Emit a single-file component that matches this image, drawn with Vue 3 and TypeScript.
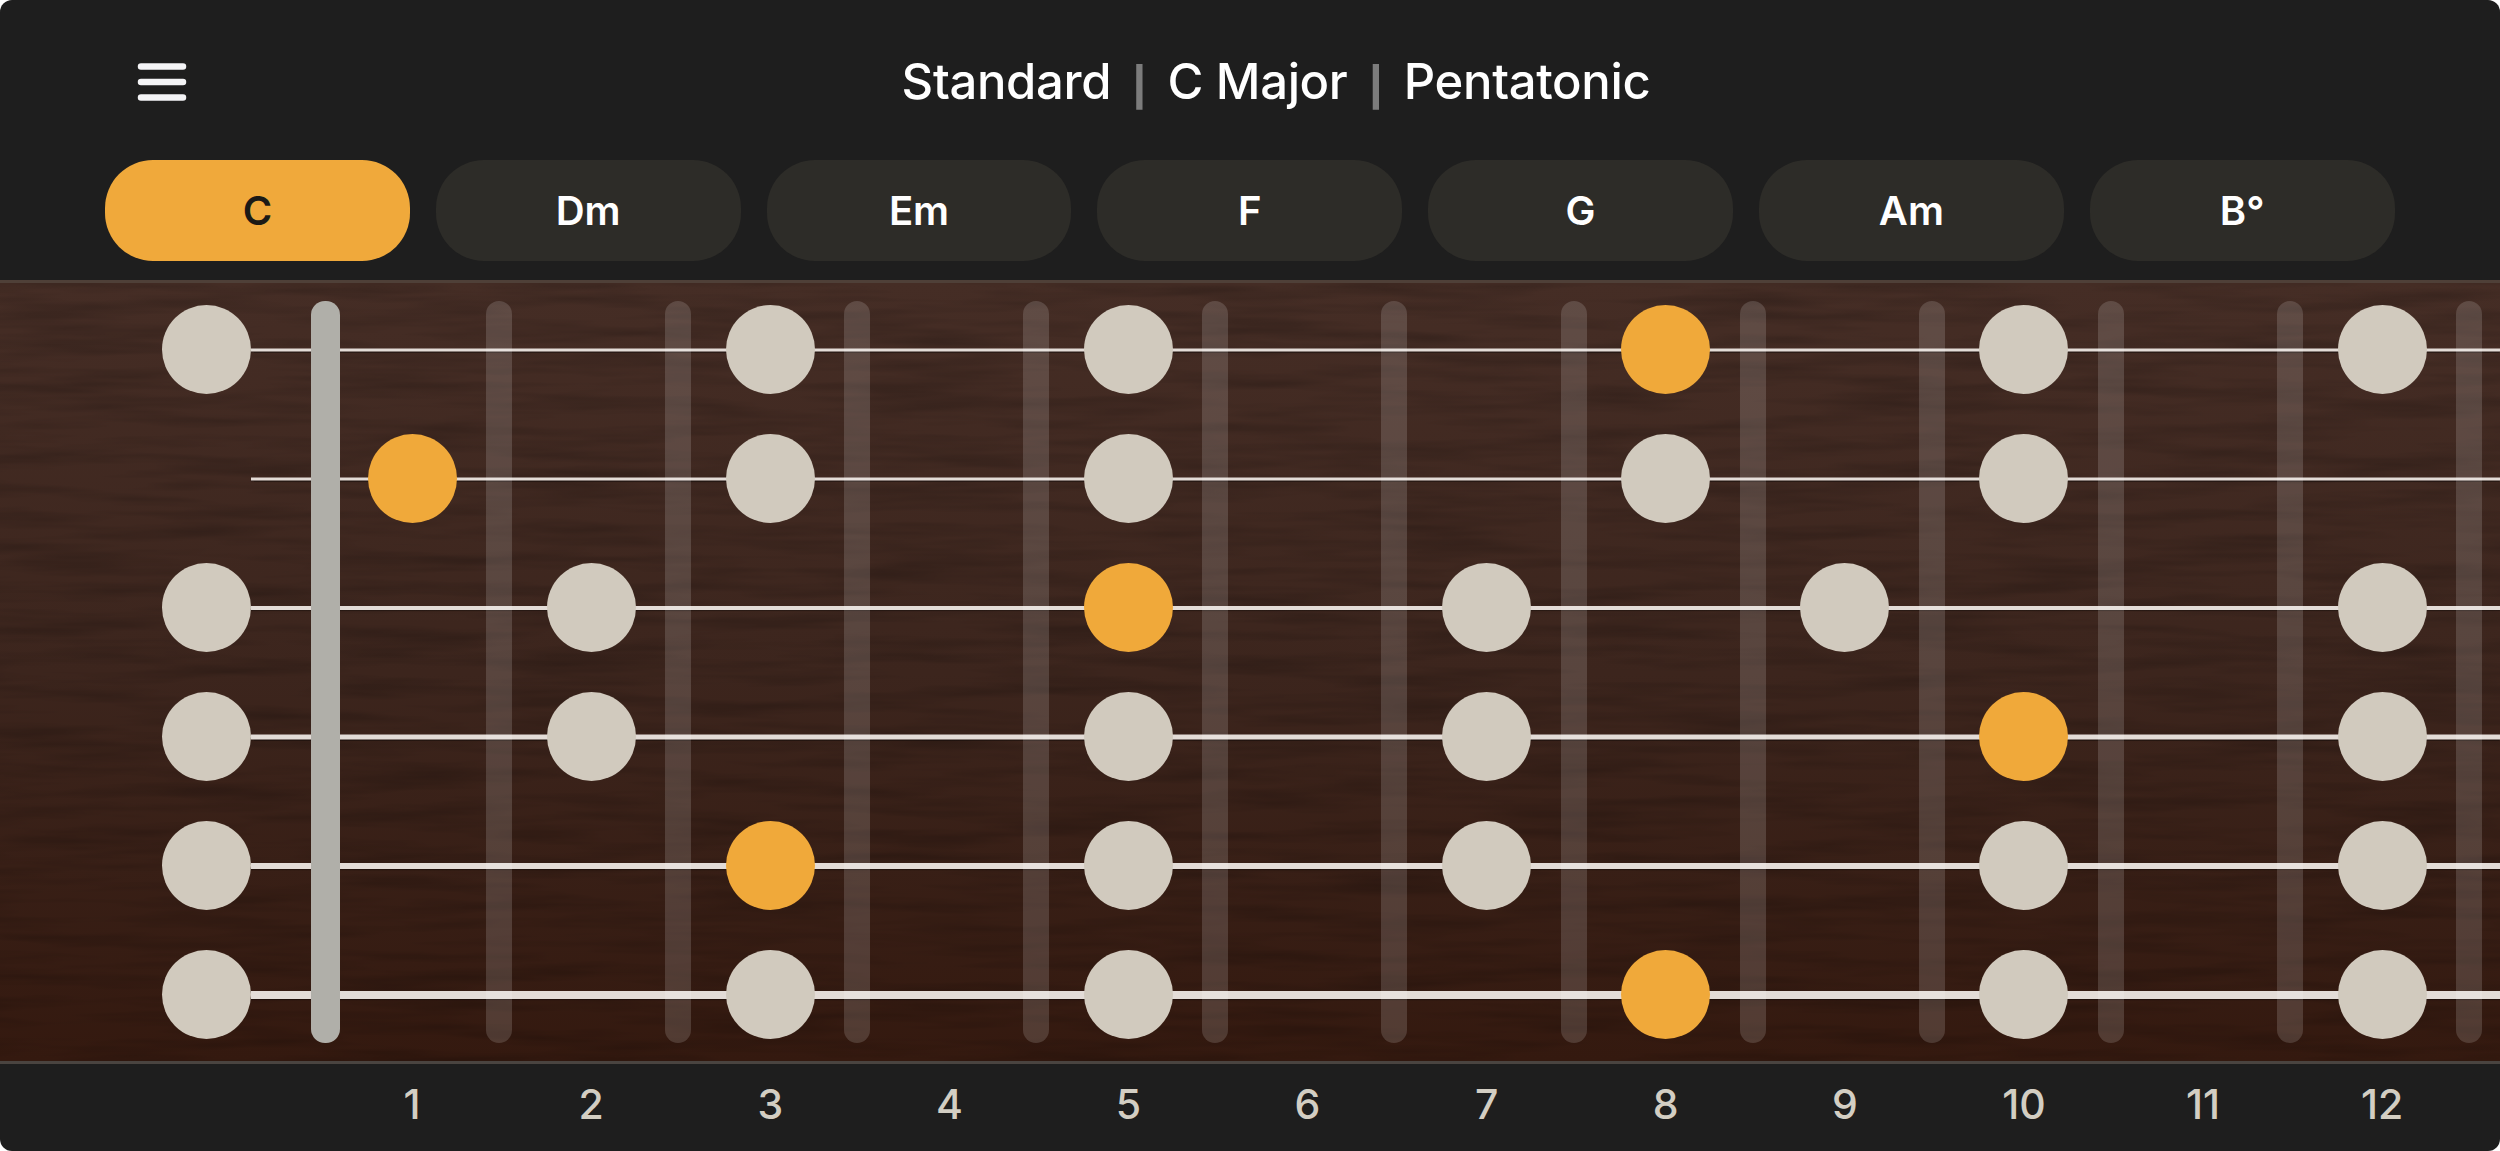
<script setup lang="ts">
interface Note {
  fret: number
  root?: boolean
}

interface GuitarString {
  thickness: number
  notes: Note[]
}

const chords = ['C', 'Dm', 'Em', 'F', 'G', 'Am', 'B°']
const activeChord = 'C'

const strings: GuitarString[] = [
  { thickness: 3, notes: [{ fret: 0 }, { fret: 3 }, { fret: 5 }, { fret: 8, root: true }, { fret: 10 }, { fret: 12 }] },
  { thickness: 3, notes: [{ fret: 1, root: true }, { fret: 3 }, { fret: 5 }, { fret: 8 }, { fret: 10 }] },
  { thickness: 4, notes: [{ fret: 0 }, { fret: 2 }, { fret: 5, root: true }, { fret: 7 }, { fret: 9 }, { fret: 12 }] },
  { thickness: 5, notes: [{ fret: 0 }, { fret: 2 }, { fret: 5 }, { fret: 7 }, { fret: 10, root: true }, { fret: 12 }] },
  { thickness: 6, notes: [{ fret: 0 }, { fret: 3, root: true }, { fret: 5 }, { fret: 7 }, { fret: 10 }, { fret: 12 }] },
  { thickness: 8, notes: [{ fret: 0 }, { fret: 3 }, { fret: 5 }, { fret: 8, root: true }, { fret: 10 }, { fret: 12 }] },
]

const fretNumbers = Array.from({ length: 12 }, (_, i) => i + 1)
</script>

<template>
  <div class="app">
    <header class="top">
      <button class="menu" aria-label="Menu">
        <svg width="50" height="40" viewBox="0 0 50 40">
          <path d="M4 4.500H46M4 20H46M4 35.500H46" stroke="#f4f4f6" stroke-width="6.500" stroke-linecap="round" fill="none" />
        </svg>
      </button>
      <div class="title">
        <span>Standard</span>
        <i>|</i>
        <span>C Major</span>
        <i>|</i>
        <span>Pentatonic</span>
      </div>
    </header>

    <nav class="chords">
      <button v-for="c in chords" :key="c" class="chip" :class="{ active: c === activeChord }">{{ c }}</button>
    </nav>

    <section class="board">
      <svg class="wood" width="100%" height="100%" preserveAspectRatio="none">
        <filter id="grain" x="0" y="0" width="100%" height="100%">
          <feTurbulence type="fractalNoise" baseFrequency="0.006 0.07" numOctaves="3" seed="7" />
          <feColorMatrix type="matrix" values="0 0 0 0 0  0 0 0 0 0  0 0 0 0 0  0.4 0 0 0 -0.16" />
        </filter>
        <rect width="100%" height="100%" filter="url(#grain)" />
      </svg>

      <div class="frets">
        <span v-for="n in fretNumbers" :key="n" class="fret"></span>
      </div>
      <div class="nut"></div>

      <div v-for="(s, i) in strings" :key="i" class="row">
        <div class="string" :style="{ height: s.thickness + 'px' }"></div>
        <div
          v-for="n in s.notes"
          :key="n.fret"
          class="note"
          :class="{ root: n.root, open: n.fret === 0 }"
          :style="{ gridColumn: n.fret + 1 }"
        ></div>
      </div>
    </section>

    <footer class="numbers">
      <span v-for="n in fretNumbers" :key="n">{{ n }}</span>
    </footer>
  </div>
</template>

<style>
html,
body {
  margin: 0;
  background: #ffffff;
}
</style>

<style scoped>
.app {
  width: 2500px;
  height: 1151px;
  overflow: hidden;
  background: #1e1e1e;
  border-radius: 12px;
  font-family: Inter, "Liberation Sans", sans-serif;
  display: flex;
  flex-direction: column;
}

.top {
  height: 160px;
  flex: none;
  position: relative;
  display: flex;
  align-items: flex-start;
  justify-content: center;
}

.menu {
  position: absolute;
  left: 137px;
  top: 62px;
  padding: 0;
  border: none;
  background: none;
  line-height: 0;
}

.title {
  margin-top: 52px;
  margin-left: 52px;
  display: flex;
  gap: 21.5px;
  color: #ffffff;
  font-size: 49px;
  line-height: 60px;
  font-weight: 500;
  letter-spacing: -0.35px;
}

.title i {
  font-family: "Liberation Sans", sans-serif;
  font-style: normal;
  font-weight: 700;
  color: #7c7c7c;
}

.chords {
  height: 120px;
  flex: none;
  box-sizing: border-box;
  padding-left: 105px;
  display: flex;
  gap: 26px;
}

.chip {
  width: 304.8px;
  height: 101px;
  border: none;
  border-radius: 48px;
  background: #2d2c28;
  color: #ffffff;
  font-family: inherit;
  font-size: 40px;
  font-weight: 600;
  padding: 0;
}

.chip.active {
  background: #f0a93b;
  color: #1c1a16;
}

.board {
  position: relative;
  height: 784px;
  flex: none;
  box-sizing: border-box;
  padding-top: 2px;
  border-top: 3px solid #4f4038;
  border-bottom: 3px solid #4a4440;
  background: linear-gradient(180deg, #452d25 0%, #3c251d 50%, #34190f 100%);
  overflow: hidden;
}

.wood {
  position: absolute;
  inset: 0;
}

.frets {
  position: absolute;
  left: 486px;
  top: 18px;
  bottom: 18px;
  display: flex;
  gap: 153.1px;
  z-index: 2;
}

.fret {
  width: 26px;
  height: 100%;
  flex: none;
  border-radius: 13px;
  background: rgba(255, 255, 255, 0.15);
  filter: blur(0.6px);
}

.nut {
  position: absolute;
  left: 311px;
  top: 18px;
  bottom: 18px;
  width: 29px;
  border-radius: 14px;
  background: #b0afa9;
  z-index: 2;
}

.row {
  position: relative;
  height: 129px;
  display: grid;
  grid-template-columns: 322.5px repeat(12, 179.1px);
  align-items: center;
}

.string {
  position: absolute;
  left: 251px;
  right: 0;
  top: 50%;
  transform: translateY(-50%);
  background: #e3dcd7;
  box-shadow: 0 1px 1px rgba(0, 0, 0, 0.35);
  z-index: 1;
}

.note {
  grid-row: 1;
  width: 89px;
  height: 89px;
  border-radius: 50%;
  background: #d1cabe;
  justify-self: center;
  z-index: 3;
}

.note.open {
  justify-self: start;
  margin-left: 162px;
}

.note.root {
  background: #f0a93a;
}

.numbers {
  flex: 1;
  display: grid;
  grid-template-columns: repeat(12, 179.1px);
  padding-left: 322.5px;
  align-items: flex-start;
  color: #d3cec3;
  font-size: 41px;
  font-weight: 500;
  line-height: 50px;
  text-align: center;
  padding-top: 15px;
}
</style>
